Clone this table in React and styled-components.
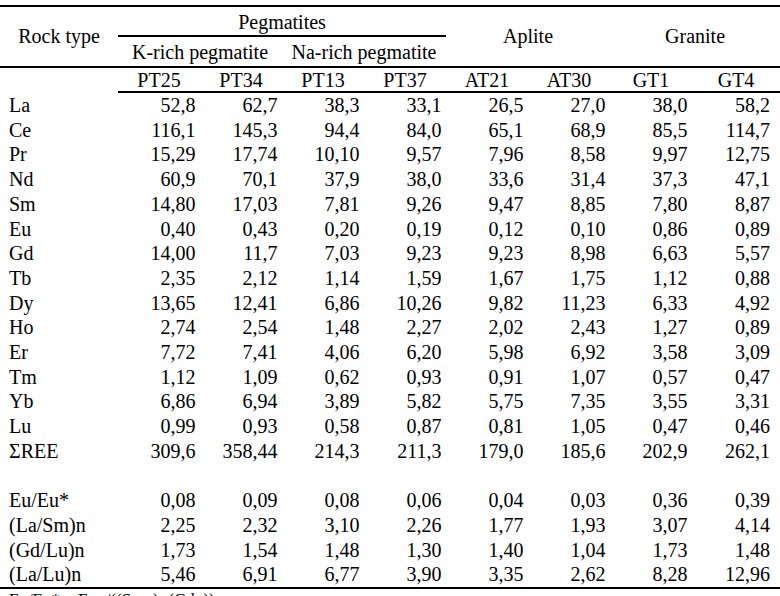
import React from 'react';
import styled, { createGlobalStyle } from 'styled-components';

const samples = ['PT25', 'PT34', 'PT13', 'PT37', 'AT21', 'AT30', 'GT1', 'GT4'];

const elements = [
    ['La', '52,8', '62,7', '38,3', '33,1', '26,5', '27,0', '38,0', '58,2'],
    ['Ce', '116,1', '145,3', '94,4', '84,0', '65,1', '68,9', '85,5', '114,7'],
    ['Pr', '15,29', '17,74', '10,10', '9,57', '7,96', '8,58', '9,97', '12,75'],
    ['Nd', '60,9', '70,1', '37,9', '38,0', '33,6', '31,4', '37,3', '47,1'],
    ['Sm', '14,80', '17,03', '7,81', '9,26', '9,47', '8,85', '7,80', '8,87'],
    ['Eu', '0,40', '0,43', '0,20', '0,19', '0,12', '0,10', '0,86', '0,89'],
    ['Gd', '14,00', '11,7', '7,03', '9,23', '9,23', '8,98', '6,63', '5,57'],
    ['Tb', '2,35', '2,12', '1,14', '1,59', '1,67', '1,75', '1,12', '0,88'],
    ['Dy', '13,65', '12,41', '6,86', '10,26', '9,82', '11,23', '6,33', '4,92'],
    ['Ho', '2,74', '2,54', '1,48', '2,27', '2,02', '2,43', '1,27', '0,89'],
    ['Er', '7,72', '7,41', '4,06', '6,20', '5,98', '6,92', '3,58', '3,09'],
    ['Tm', '1,12', '1,09', '0,62', '0,93', '0,91', '1,07', '0,57', '0,47'],
    ['Yb', '6,86', '6,94', '3,89', '5,82', '5,75', '7,35', '3,55', '3,31'],
    ['Lu', '0,99', '0,93', '0,58', '0,87', '0,81', '1,05', '0,47', '0,46'],
    ['\u03A3REE', '309,6', '358,44', '214,3', '211,3', '179,0', '185,6', '202,9', '262,1'],
];

const ratios = [
    ['Eu/Eu*', '0,08', '0,09', '0,08', '0,06', '0,04', '0,03', '0,36', '0,39'],
    ['(La/Sm)n', '2,25', '2,32', '3,10', '2,26', '1,77', '1,93', '3,07', '4,14'],
    ['(Gd/Lu)n', '1,73', '1,54', '1,48', '1,30', '1,40', '1,04', '1,73', '1,48'],
    ['(La/Lu)n', '5,46', '6,91', '6,77', '3,90', '3,35', '2,62', '8,28', '12,96'],
];

const DataRow = ({ row }) => (
    <tr>
        <Label>{row[0]}</Label>
        {row.slice(1).map((v, i) => (
            <Value key={i} last={i === 7}>{v}</Value>
        ))}
    </tr>
);

export default () => (
    <Page>
        <GlobalStyle />
        <Table>
            <colgroup>
                <col style={{ width: 118 }} />
                {samples.map((s, i) => (
                    <col key={s} style={{ width: i === 7 ? 88 : 82 }} />
                ))}
            </colgroup>
            <thead>
                <tr>
                    <Head rowSpan={2} ruled>Rock type</Head>
                    <Group colSpan={4}>Pegmatites</Group>
                    <Head colSpan={2} rowSpan={2} ruled>Aplite</Head>
                    <Head colSpan={2} rowSpan={2} ruled>Granite</Head>
                </tr>
                <tr>
                    <SubGroup colSpan={2}>K-rich pegmatite</SubGroup>
                    <SubGroup colSpan={2}>Na-rich pegmatite</SubGroup>
                </tr>
                <tr>
                    <Sample />
                    {samples.map((s) => (
                        <Sample key={s} ruled>{s}</Sample>
                    ))}
                </tr>
            </thead>
            <Body>
                {elements.map((r) => (
                    <DataRow key={r[0]} row={r} />
                ))}
                <tr>
                    <Label>&nbsp;</Label>
                    <td colSpan={8} />
                </tr>
                {ratios.map((r) => (
                    <DataRow key={r[0]} row={r} />
                ))}
            </Body>
        </Table>
        <Note>
            Eu/Eu* = Eu<small>N</small>/((Sm<small>N</small>)&times;(Gd<small>N</small>))<small>0.5</small>
        </Note>
    </Page>
);

const GlobalStyle = createGlobalStyle`
    html, body {
        margin: 0;
        padding: 0;
        overflow: hidden;
        background: #fff;
    }
`;

const Page = styled.div`
    width: 780px;
    padding-top: 5px;
    font-family: "Liberation Serif", "Times New Roman", serif;
    color: #000;
`;

const Table = styled.table`
    width: 780px;
    table-layout: fixed;
    border-collapse: separate;
    border-spacing: 0;
    border-top: 2px solid #000;
    font-size: 20px;

    td, th {
        padding: 0;
        font-weight: normal;
        white-space: nowrap;
    }
`;

const Head = styled.th`
    text-align: center;
    vertical-align: middle;
    border-bottom: ${(p) => (p.ruled ? '2px solid #000' : 'none')};
`;

const Group = styled.th`
    text-align: center;
    line-height: 26px;
    padding-top: 2px !important;
    border-bottom: 2px solid #000;
`;

const SubGroup = styled.th`
    text-align: center;
    line-height: 28px;
    padding-top: 1px !important;
    border-bottom: 2px solid #000;
`;

const Sample = styled.th`
    text-align: center;
    line-height: 22px;
    padding-top: 1px !important;
    border-bottom: ${(p) => (p.ruled ? '2px solid #000' : 'none')};
`;

const Body = styled.tbody`
    tr:last-child td {
        border-bottom: 2px solid #000;
    }

    td {
        height: 24.7px;
        line-height: 24.7px;
    }
`;

const Label = styled.td`
    text-align: left;
    padding-left: 9px !important;
`;

const Value = styled.td`
    text-align: right;
    padding-right: ${(p) => (p.last ? '10px' : '4.5px')} !important;
`;

const Note = styled.div`
    margin-top: 2px;
    font-size: 17px;
    line-height: 18px;
    padding-left: 9px;
    white-space: nowrap;

    small {
        font-size: 12px;
    }
`;
